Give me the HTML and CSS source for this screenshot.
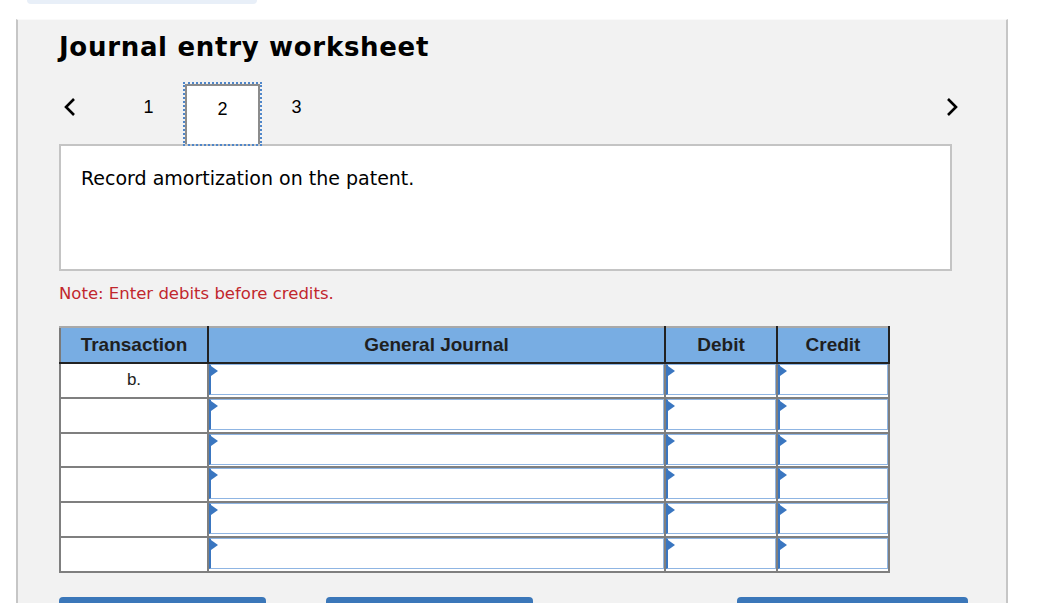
FILE: index.html
```html
<!DOCTYPE html>
<html lang="en">
<head>
    <meta charset="UTF-8">
    <meta name="viewport" content="width=device-width, initial-scale=1.0">
    <title>Journal entry worksheet</title>
    <link rel="stylesheet" href="styles.css">
</head>

<body>
    <div class="top-tab"></div>

    <div class="panel">
        <h2 class="title">Journal entry worksheet</h2>

        <div class="nav">
            <span class="arrow prev">
                <svg width="14" height="20" viewBox="0 0 14 20"><polyline points="11,2 3,10 11,18" fill="none" stroke="#000" stroke-width="2.6"/></svg>
            </span>
            <span class="step">1</span>
            <span class="step current">2</span>
            <span class="step">3</span>
            <span class="arrow next">
                <svg width="14" height="20" viewBox="0 0 14 20"><polyline points="3,2 11,10 3,18" fill="none" stroke="#000" stroke-width="2.6"/></svg>
            </span>
        </div>

        <div class="question">
            <p>Record amortization on the patent.</p>
        </div>

        <p class="note">Note: Enter debits before credits.</p>

        <table class="journal">
            <thead>
                <tr>
                    <th class="col-trans">Transaction</th>
                    <th class="col-gj">General Journal</th>
                    <th class="col-num">Debit</th>
                    <th class="col-num">Credit</th>
                </tr>
            </thead>
            <tbody>
                <tr>
                    <td class="trans">b.</td>
                    <td><div class="entry"></div></td>
                    <td><div class="entry"></div></td>
                    <td><div class="entry"></div></td>
                </tr>
                <tr>
                    <td class="trans"></td>
                    <td><div class="entry"></div></td>
                    <td><div class="entry"></div></td>
                    <td><div class="entry"></div></td>
                </tr>
                <tr>
                    <td class="trans"></td>
                    <td><div class="entry"></div></td>
                    <td><div class="entry"></div></td>
                    <td><div class="entry"></div></td>
                </tr>
                <tr>
                    <td class="trans"></td>
                    <td><div class="entry"></div></td>
                    <td><div class="entry"></div></td>
                    <td><div class="entry"></div></td>
                </tr>
                <tr>
                    <td class="trans"></td>
                    <td><div class="entry"></div></td>
                    <td><div class="entry"></div></td>
                    <td><div class="entry"></div></td>
                </tr>
                <tr>
                    <td class="trans"></td>
                    <td><div class="entry"></div></td>
                    <td><div class="entry"></div></td>
                    <td><div class="entry"></div></td>
                </tr>
            </tbody>
        </table>

        <div class="buttons">
            <button class="btn btn-record" type="button"></button>
            <button class="btn btn-clear" type="button"></button>
            <button class="btn btn-view" type="button"></button>
        </div>
    </div>
</body>

</html>
```

FILE: styles.css
```css
* {
    margin: 0;
    padding: 0;
    box-sizing: border-box;
}

body {
    background-color: #fff;
    font-family: "DejaVu Sans", Verdana, sans-serif;
    color: #000;
    overflow: hidden;
}

.top-tab {
    width: 230px;
    height: 4px;
    margin-left: 27px;
    background-color: #e8eff8;
    border-radius: 0 0 8px 8px;
}

.panel {
    width: 992px;
    height: 600px;
    margin: 15px 0 0 16px;
    padding: 12px 54px 0 41px;
    background-color: #f2f2f2;
    border-left: 2px solid #c6c6c6;
    border-right: 2px solid #c6c6c6;
    border-top: 1px solid #fafafa;
}

.title {
    font-size: 26px;
    line-height: 30px;
    font-weight: bold;
    letter-spacing: 0.7px;
    margin-bottom: 22px;
}

/* step navigation */
.nav {
    display: flex;
    align-items: center;
    height: 60px;
    font-family: "Liberation Sans", Arial, sans-serif;
    font-size: 18px;
}

.nav .arrow {
    display: flex;
    align-items: center;
    padding-bottom: 15px;
}

.nav .prev {
    width: 53px;
    padding-left: 4px;
}

.nav .next {
    margin-left: auto;
    margin-right: -7px;
}

.nav .step {
    width: 75px;
    height: 60px;
    display: flex;
    align-items: center;
    justify-content: center;
    margin-left: -1px;
    padding-bottom: 14px;
}

.nav .step.current {
    background-color: #fff;
    border: 2px solid #8c8c8c;
    border-bottom: none;
    outline: 2px dotted #4f86c9;
    outline-offset: 0;
    padding-bottom: 12px;
}

.question {
    height: 127px;
    background-color: #fff;
    border: 2px solid #c4c4c4;
    padding: 21px 20px;
}

.question p {
    font-size: 19px;
    line-height: 22px;
}

.note {
    margin-top: 13px;
    font-size: 16.5px;
    line-height: 19px;
    color: #c1272d;
}

/* journal table */
.journal {
    margin-top: 23px;
    border-collapse: collapse;
    border: 2px solid #7a7a7a;
    font-family: "Liberation Sans", Arial, sans-serif;
    table-layout: fixed;
    width: 830px;
}

.journal th {
    height: 36px;
    background-color: #78ade3;
    color: #1f1f1f;
    font-size: 19px;
    font-weight: bold;
    border: 2px solid #222;
    border-top: 2px solid #a9a9a9;
}

.journal th:first-child {
    border-left-color: #7a7a7a;
}

.journal .col-trans { width: 148px; }
.journal .col-gj { width: 457px; }
.journal .col-num { width: 112px; }

.journal td {
    height: 34.8px;
    background-color: #fff;
    border: 2px solid #7f7f7f;
    padding: 0;
    vertical-align: top;
}

.journal td.trans {
    text-align: center;
    vertical-align: middle;
    font-size: 17px;
    color: #222;
}

.entry {
    position: relative;
    height: 31px;
    border: 1px solid #8fb5e3;
    border-left: 2px solid #3a76c0;
}

.entry::before {
    content: '';
    position: absolute;
    top: 1px;
    left: 0;
    border-top: 5px solid transparent;
    border-bottom: 5px solid transparent;
    border-left: 7px solid #3a76c0;
}

.buttons {
    display: flex;
    margin-top: 24px;
}

.btn {
    flex-shrink: 0;
    height: 30px;
    border: none;
    border-radius: 4px 4px 0 0;
    background-color: #3b77b9;
}

.btn-record { width: 207px; }
.btn-clear { width: 207px; margin-left: 60px; }
.btn-view { width: 231px; margin-left: 204px; }
```
